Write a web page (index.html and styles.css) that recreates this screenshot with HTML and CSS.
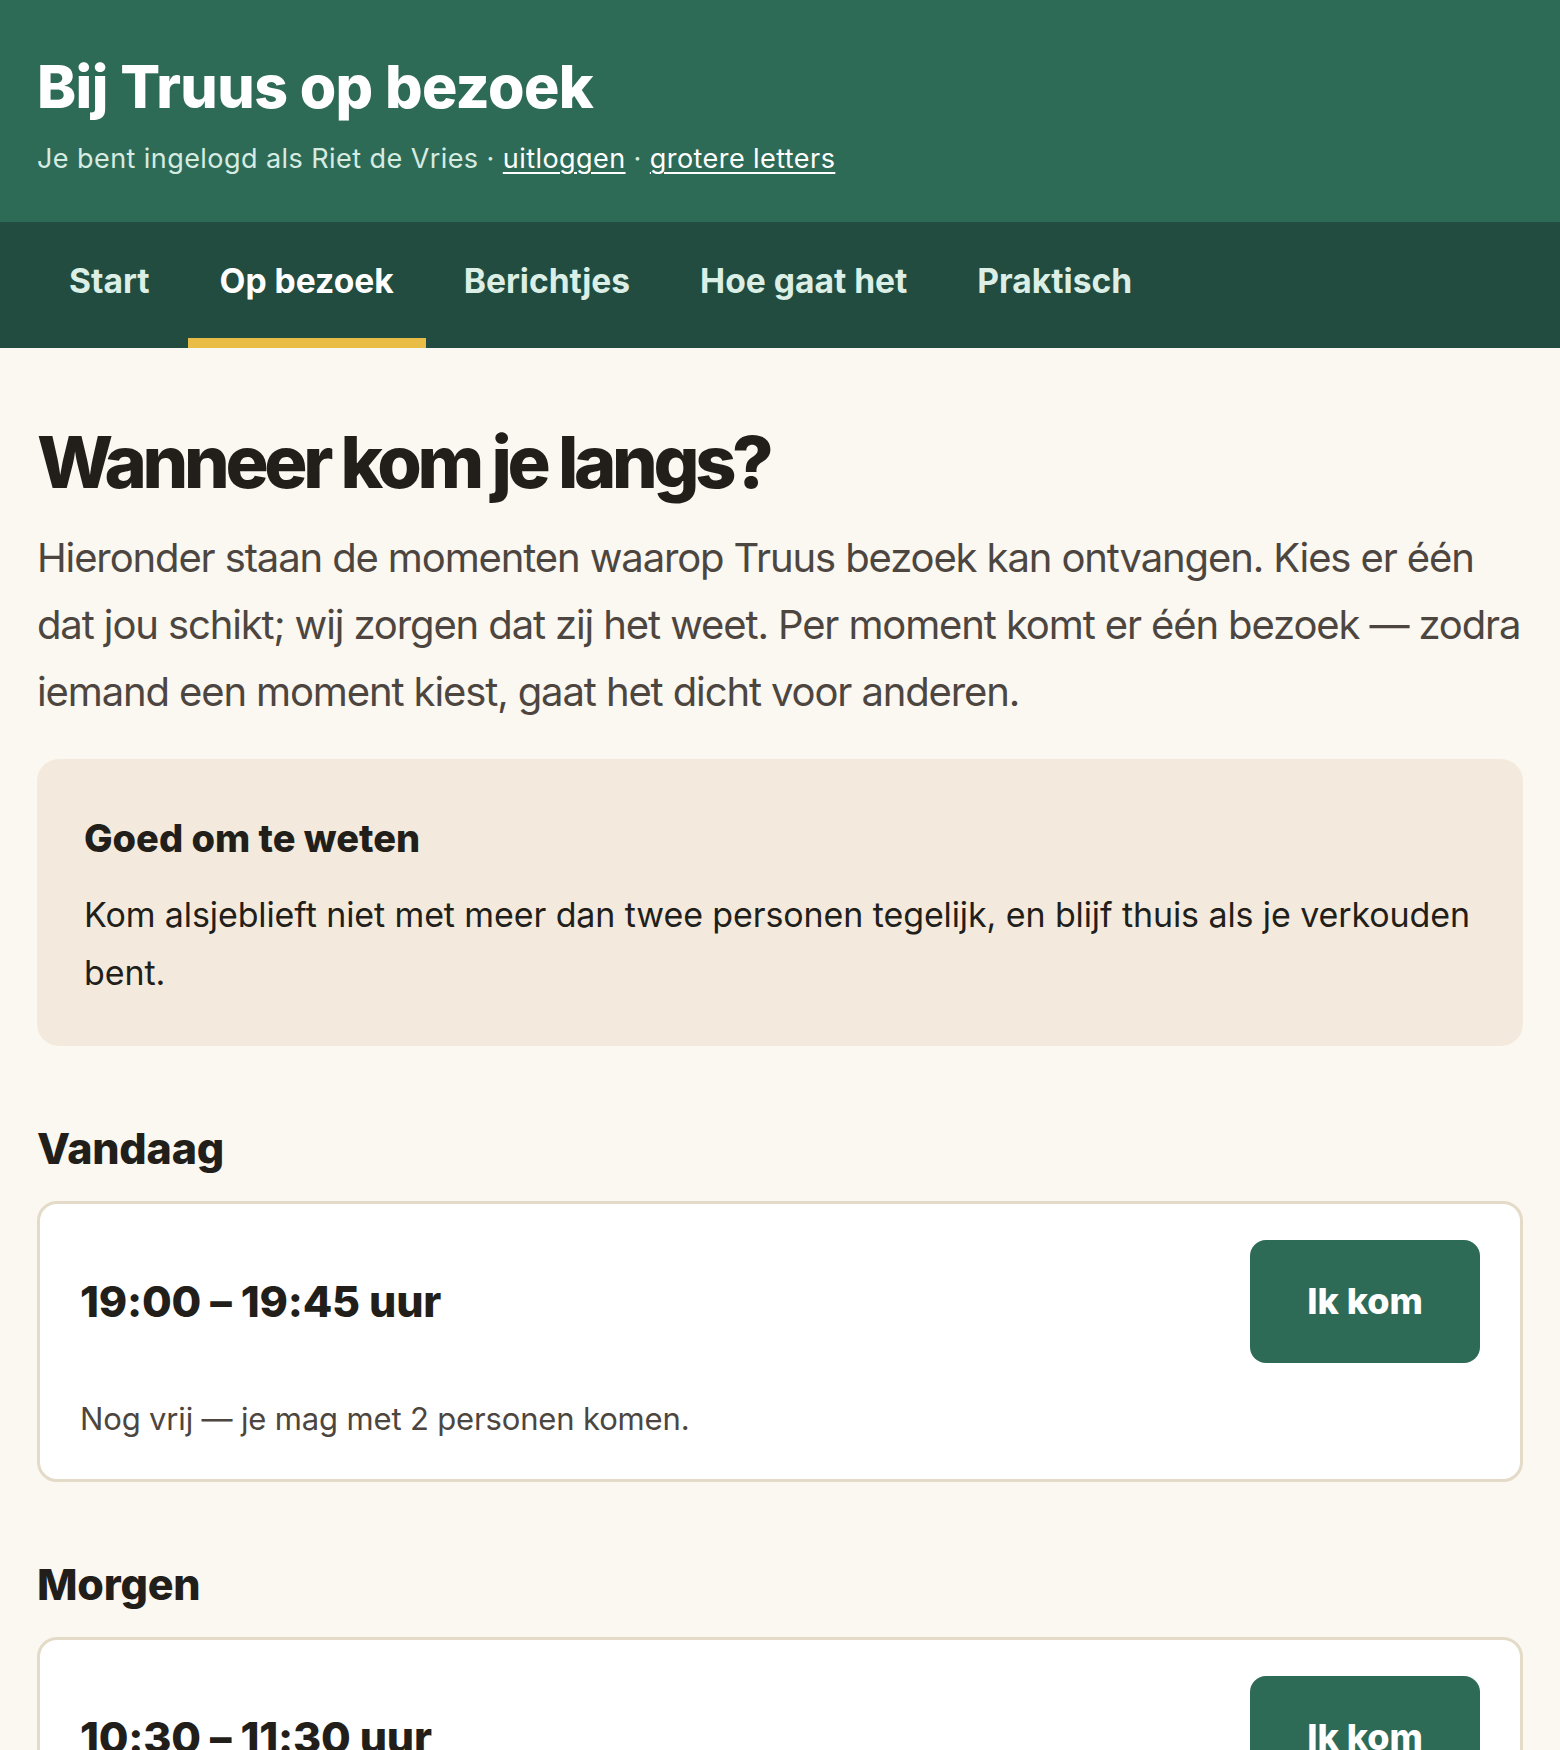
FILE: index.html
```html
<!DOCTYPE html>
<html lang="nl">
<head>
<meta charset="utf-8">
<title>Bij Truus op bezoek</title>
<link rel="stylesheet" href="styles.css">
</head>
<body>
<header class="site-header">
  <div class="site-title">Bij Truus op bezoek</div>
  <div class="site-user">Je bent ingelogd als Riet de Vries · <a href="#" class="header-link">uitloggen</a> · <a href="#" class="header-link">grotere letters</a></div>
</header>
<nav class="main-nav">
  <a href="#" class="nav-item">Start</a>
  <a href="#" class="nav-item nav-item-active">Op bezoek</a>
  <a href="#" class="nav-item">Berichtjes</a>
  <a href="#" class="nav-item">Hoe gaat het</a>
  <a href="#" class="nav-item">Praktisch</a>
</nav>
<main class="content">
  <h1 class="page-title">Wanneer kom je langs?</h1>
  <p class="intro">Hieronder staan de momenten waarop Truus bezoek kan ontvangen. Kies er één dat jou schikt; wij zorgen dat zij het weet. Per moment komt er één bezoek — zodra iemand een moment kiest, gaat het dicht voor anderen.</p>
  <section class="notice">
    <h2 class="notice-title">Goed om te weten</h2>
    <p class="notice-text">Kom alsjeblieft niet met meer dan twee personen tegelijk, en blijf thuis als je verkouden bent.</p>
  </section>

  <section class="day">
    <h2 class="day-title">Vandaag</h2>
    <div class="slot">
      <div class="slot-row">
        <div class="slot-time">19:00 – 19:45 uur</div>
        <button class="slot-button" type="button">Ik kom</button>
      </div>
      <p class="slot-status">Nog vrij — je mag met 2 personen komen.</p>
    </div>
  </section>

  <section class="day">
    <h2 class="day-title">Morgen</h2>
    <div class="slot">
      <div class="slot-row">
        <div class="slot-time">10:30 – 11:30 uur</div>
        <button class="slot-button" type="button">Ik kom</button>
      </div>
      <p class="slot-status">Nog vrij — je mag met 2 personen komen.</p>
    </div>
  </section>
</main>
</body>
</html>
```

FILE: styles.css
```css
* { box-sizing: border-box; }

body {
  margin: 0;
  background: #fbf7f1;
  font-family: Inter, "Noto Sans", sans-serif;
  color: #221e1a;
}

.site-header {
  background: #2e6b57;
  padding: 55px 37px 44px;
}

.site-title {
  color: #ffffff;
  font-size: 59px;
  font-weight: 800;
  line-height: 64px;
  letter-spacing: -0.01em;
}

.site-user {
  margin-top: 21px;
  color: #d6ebe1;
  font-size: 27px;
  line-height: 38px;
  letter-spacing: 0.016em;
}

.header-link {
  color: #ffffff;
  text-decoration: underline;
  text-underline-offset: 4px;
  text-decoration-thickness: 2px;
}

.main-nav {
  background: #214c3f;
  display: flex;
  gap: 6px;
  padding: 0 37px;
}

.nav-item {
  display: block;
  padding: 35px 32px 33px;
  line-height: 48px;
  font-size: 33.6px;
  font-weight: 700;
  color: #dcefe6;
  text-decoration: none;
  border-bottom: 10px solid transparent;
}

.nav-item-active {
  color: #ffffff;
  border-bottom-color: #e9bd45;
}

.content {
  padding: 74px 37px 80px;
}

.page-title {
  margin: 0;
  font-size: 72px;
  line-height: 79px;
  font-weight: 800;
  letter-spacing: -0.06em;
  color: #221e1a;
}

.intro {
  margin: 23px 0 0;
  font-size: 40px;
  line-height: 67px;
  letter-spacing: -0.028em;
  color: #4d4640;
}

.notice {
  margin-top: 34px;
  background: #f3eadd;
  border-radius: 22px;
  padding: 50px 47px 44px;
}

.notice-title {
  margin: 0;
  font-size: 38px;
  line-height: 59px;
  font-weight: 800;
  color: #221e1a;
}

.notice-text {
  margin: 18px 0 0;
  font-size: 34px;
  line-height: 58px;
  letter-spacing: -0.003em;
  color: #221e1a;
}

.day {
  margin-top: 78px;
}

.day-title {
  margin: 0;
  font-size: 43px;
  line-height: 49px;
  font-weight: 800;
  letter-spacing: -0.005em;
  color: #221e1a;
}

.slot {
  margin-top: 28px;
  background: #ffffff;
  border: 3px solid #e4dac8;
  border-radius: 20px;
  padding: 36px 40px 35px;
}

.slot-row {
  display: flex;
  align-items: center;
  justify-content: space-between;
}

.slot-time {
  font-size: 43px;
  font-weight: 800;
  line-height: 49px;
  letter-spacing: -0.005em;
  color: #221e1a;
}

.slot-button {
  font-family: Inter, "Noto Sans", sans-serif;
  background: #2e6b57;
  color: #ffffff;
  border: none;
  border-radius: 16px;
  font-size: 36px;
  font-weight: 800;
  line-height: 43px;
  padding: 40px 57px;
  cursor: pointer;
}

.slot-status {
  margin: 31px 0 0;
  font-size: 31px;
  line-height: 50px;
  letter-spacing: -0.005em;
  color: #4d4640;
}
```
